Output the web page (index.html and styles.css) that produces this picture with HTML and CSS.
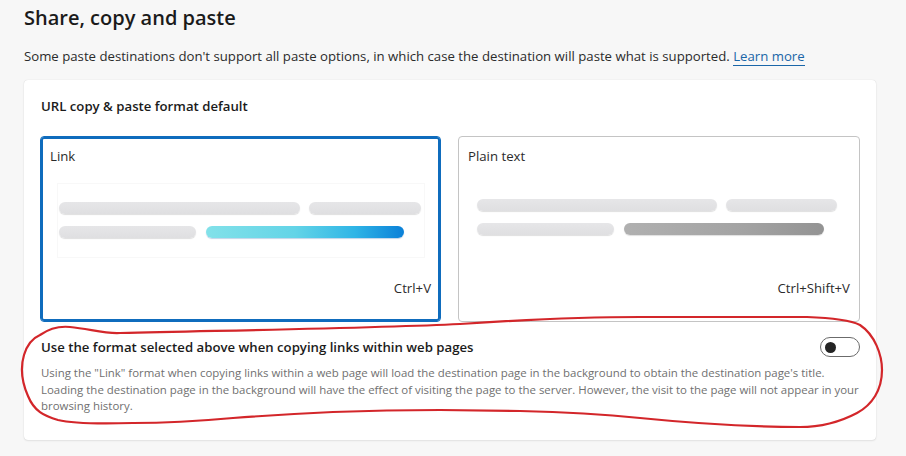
FILE: index.html
```html
<!DOCTYPE html>
<html lang="en">
<head>
<meta charset="utf-8">
<title>Share, copy and paste</title>
<link rel="stylesheet" href="styles.css">
</head>
<body>
<main class="page">
  <h1 class="title">Share, copy and paste</h1>
  <p class="intro">Some paste destinations don't support all paste options, in which case the destination will paste what is supported. <a class="learn" href="#">Learn more</a></p>

  <section class="card">
    <h2 class="card-head">URL copy &amp; paste format default</h2>
    <div class="options">
      <div class="option selected">
        <div class="opt-label">Link</div>
        <div class="preview framed">
          <div class="row">
            <span class="pill" style="width:241px"></span>
            <span class="pill" style="width:112px"></span>
          </div>
          <div class="row">
            <span class="pill" style="width:137px"></span>
            <span class="pill blue" style="width:198px"></span>
          </div>
        </div>
        <div class="shortcut">Ctrl+V</div>
      </div>
      <div class="option">
        <div class="opt-label">Plain text</div>
        <div class="preview plain">
          <div class="row">
            <span class="pill" style="width:240px"></span>
            <span class="pill" style="width:111px"></span>
          </div>
          <div class="row">
            <span class="pill" style="width:137px"></span>
            <span class="pill gray" style="width:200px"></span>
          </div>
        </div>
        <div class="shortcut">Ctrl+Shift+V</div>
      </div>
    </div>

    <div class="setting">
      <div class="setting-row">
        <div class="setting-title">Use the format selected above when copying links within web pages</div>
        <span class="toggle"><span class="knob"></span></span>
      </div>
      <div class="setting-desc">Using the "Link" format when copying links within a web page will load the destination page in the background to obtain the destination page's title. Loading the destination page in the background will have the effect of visiting the page to the server. However, the visit to the page will not appear in your browsing history.</div>
    </div>
  </section>
</main>

<svg class="annotation" width="906" height="456" viewBox="0 0 906 456" aria-hidden="true">
  <path d="M40 335 C50 328, 60 326, 70 327 C90 329, 105 334, 120 333 C250 330, 380 328, 460 324 C520 320, 580 317, 640 317 L807 317 C835 318, 850 320, 860 325 C875 335, 882 355, 882 370 C882 390, 872 405, 857 413 C840 422, 820 427, 800 427 C760 427, 700 424, 640 418 C600 414, 560 412, 520 411 L440 410 C400 410, 360 411, 333 412 C290 414, 260 416, 233 418 C200 421, 160 423, 133 423 C100 424, 70 423, 58 420 C44 416, 34 411, 28 396 C21 380, 21 365, 24 355 C27 345, 33 338, 40 335 Z" fill="none" stroke="#d3262a" stroke-width="2.2" stroke-linejoin="round"/>
</svg>
</body>
</html>
```

FILE: styles.css
```css
* { box-sizing: border-box; }

html, body {
  margin: 0;
  padding: 0;
  background: #f7f7f7;
  font-family: "Open Sans", "Noto Sans", "Liberation Sans", sans-serif;
  color: #1b1b1b;
}

body {
  position: relative;
  width: 906px;
  height: 456px;
  overflow: hidden;
}

.page {
  padding: 4px 30px 0 24px;
}

.title {
  margin: 0;
  font-size: 20px;
  line-height: 28px;
  font-weight: 600;
}

.intro {
  margin: 14px 0 0;
  font-size: 13.2px;
  line-height: 20px;
  color: #2b2b2b;
}

.learn {
  color: #1a66a8;
  text-decoration: none;
  border-bottom: 1px solid #1a66a8;
}

.card {
  margin-top: 14px;
  height: 360px;
  background: #ffffff;
  border-radius: 4px;
  box-shadow: 0 0 1px rgba(0,0,0,0.18), 0 1px 2px rgba(0,0,0,0.08);
  padding: 16px 16px 0;
}

.card-head {
  margin: 0;
  font-size: 13.2px;
  line-height: 20px;
  font-weight: 600;
  padding-left: 1px;
}

.options {
  margin-top: 20px;
  display: grid;
  grid-template-columns: 401px 402px;
  column-gap: 17px;
}

.option {
  height: 186px;
  border: 1px solid #c4c4c4;
  border-radius: 4px;
  padding: 9px 9px 23px;
  display: flex;
  flex-direction: column;
}

.option.selected {
  border-color: #0f6cbd;
  box-shadow: inset 0 0 0 2px #0f6cbd;
}

.opt-label {
  font-size: 13.2px;
  line-height: 20px;
  color: #2b2b2b;
}

.preview {
  display: flex;
  flex-direction: column;
  gap: 12px;
}

.preview.framed {
  margin: 17px 6px 0 7px;
  padding: 18px 0 19px 1px;
  border: 1px solid #f8f8f8;
}

.preview.plain {
  margin: 33px 0 0 9px;
}

.row {
  display: flex;
  gap: 9px;
}

.row + .row .pill + .pill { margin-left: 1px; }

.pill {
  display: block;
  height: 12px;
  border-radius: 6px;
  background: linear-gradient(#e6e6e8, #dfdfe1);
  box-shadow: 0 1px 1px rgba(0,0,0,0.13);
}

.pill.blue {
  background: linear-gradient(90deg, #82e1e9 0%, #63d4e7 45%, #2fb5e6 75%, #0a80d8 100%);
  box-shadow: 0 1px 1px rgba(0,80,160,0.25);
}

.pill.gray {
  background: linear-gradient(90deg, #b0b0b0 0%, #a3a3a3 60%, #939393 100%);
}

.shortcut {
  margin-top: auto;
  text-align: right;
  font-size: 13.2px;
  line-height: 20px;
  color: #2b2b2b;
}

.setting {
  margin-top: 15px;
}

.setting-row {
  display: flex;
  align-items: center;
  justify-content: space-between;
  gap: 20px;
}

.setting-title {
  font-size: 13.2px;
  line-height: 20px;
  font-weight: 600;
  padding-left: 1px;
  color: #1b1b1b;
}

.setting-desc {
  margin-top: 8px;
  font-size: 11.45px;
  line-height: 16.5px;
  color: #707070;
  padding-left: 1px;
}

.toggle {
  flex: none;
  width: 40px;
  height: 20px;
  border: 1px solid #6b6b6b;
  border-radius: 10px;
  display: flex;
  align-items: center;
  padding-left: 4px;
}

.knob {
  width: 11px;
  height: 11px;
  border-radius: 50%;
  background: #242424;
}

.annotation {
  position: absolute;
  left: 0;
  top: 0;
  pointer-events: none;
}
```
